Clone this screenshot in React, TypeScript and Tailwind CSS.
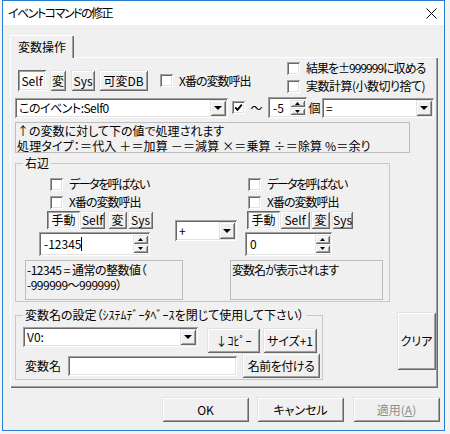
import React from "react";

const FONT = "font-['Noto_Sans_CJK_JP',sans-serif] [font-feature-settings:'palt']";
const RAISED =
  "bg-[#f0f0f0] shadow-[inset_1px_1px_#e3e3e3,inset_-1px_-1px_#696969,inset_2px_2px_#ffffff,inset_-2px_-2px_#a0a0a0]";
const PRESSED =
  "bg-[#fbfbfb] shadow-[inset_1px_1px_#696969,inset_-1px_-1px_#ffffff,inset_2px_2px_#a0a0a0,inset_-2px_-2px_#e3e3e3]";
const SUNKEN =
  "bg-white shadow-[inset_1px_1px_#a0a0a0,inset_-1px_-1px_#ffffff,inset_2px_2px_#696969,inset_-2px_-2px_#e3e3e3]";

function Btn({
  children,
  className = "",
  pressed = false,
}: {
  children: React.ReactNode;
  className?: string;
  pressed?: boolean;
}) {
  return (
    <div
      className={`flex items-center justify-center leading-none shrink-0 whitespace-nowrap ${
        pressed ? PRESSED : RAISED
      } ${className}`}
    >
      {children}
    </div>
  );
}

function Arrow() {
  return (
    <svg width="8" height="4" viewBox="0 0 8 4">
      <path d="M0 0H8L4 4Z" fill="#000" />
    </svg>
  );
}

function Combo({ text, className = "" }: { text: string; className?: string }) {
  return (
    <div className={`flex p-[2px] shrink-0 ${SUNKEN} ${className}`}>
      <div className="flex-1 flex items-center pl-[2px] leading-none whitespace-nowrap overflow-hidden">
        {text}
      </div>
      <div className={`w-[16px] flex items-center justify-center ${RAISED}`}>
        <Arrow />
      </div>
    </div>
  );
}

function Spin({
  value,
  caret = false,
  className = "",
}: {
  value: string;
  caret?: boolean;
  className?: string;
}) {
  const half = `flex-1 flex items-center justify-center ${RAISED}`;
  return (
    <div className={`flex p-[2px] shrink-0 ${SUNKEN} ${className}`}>
      <div className="flex-1 flex items-center pl-[3px] leading-none">
        {value}
        {caret && <span className="w-px h-[14px] bg-black" />}
      </div>
      <div className="w-[15px] flex flex-col gap-px py-px">
        <div className={half}>
          <svg width="5" height="3" viewBox="0 0 5 3">
            <path d="M0 3H5L2.5 0Z" fill="#000" />
          </svg>
        </div>
        <div className={half}>
          <svg width="5" height="3" viewBox="0 0 5 3">
            <path d="M0 0H5L2.5 3Z" fill="#000" />
          </svg>
        </div>
      </div>
    </div>
  );
}

function Check({ checked = false, className = "" }: { checked?: boolean; className?: string }) {
  return (
    <span
      className={`inline-flex w-[13px] h-[13px] shrink-0 items-center justify-center ${SUNKEN} ${className}`}
    >
      {checked && (
        <svg width="9" height="9" viewBox="0 0 9 9">
          <path d="M1.2 4.3L3.5 6.8L7.8 1.6" fill="none" stroke="#000" strokeWidth="1.8" />
        </svg>
      )}
    </span>
  );
}

function CheckRow({
  label,
  className = "",
  textClass = "",
}: {
  label: string;
  className?: string;
  textClass?: string;
}) {
  return (
    <div className={`flex items-center h-[18px] ${className}`}>
      <Check />
      <span className={`ml-[6px] leading-none whitespace-nowrap ${textClass}`}>{label}</span>
    </div>
  );
}

export default function App() {
  return (
    <div className={`w-[450px] h-[434px] bg-[#f4f4f4] overflow-hidden text-[12px] text-black ${FONT}`}>
      <div className="ml-[2px] w-[443px] h-[431px] border border-[#2a7fd4] bg-[#f0f0f0] flex flex-col">
        {/* title bar */}
        <div className="h-[24px] bg-white flex items-center shrink-0">
          <span className="ml-[5px] leading-none tracking-[-1.5px]">イベントコマンドの修正</span>
          <svg className="ml-auto mr-[7px]" width="11" height="11" viewBox="0 0 11 11">
            <path d="M0.5 0.5L10.5 10.5M10.5 0.5L0.5 10.5" stroke="#000" strokeWidth="1" />
          </svg>
        </div>

        {/* tab */}
        <div className="mt-[10px] ml-[7px] w-[64px] h-[23px] -mb-px relative z-10 bg-[#f0f0f0] flex items-center justify-center leading-none shadow-[inset_1px_0_#ffffff,inset_0_1px_#ffffff,inset_-1px_0_#696969,inset_-2px_0_#a0a0a0]">
          変数操作
        </div>

        {/* tab panel */}
        <div className="ml-[7px] w-[428px] h-[331px] shrink-0 flex flex-col shadow-[inset_1px_1px_#ffffff,inset_-1px_-1px_#696969,inset_-2px_-2px_#a0a0a0]">
          {/* row 1 */}
          <div className="flex mt-[2px] h-[36px]">
            <div className="w-[277px] flex items-center mt-[11px] h-[21px] pl-[8px]">
              <Btn pressed className="w-[28px] h-[21px]">Self</Btn>
              <Btn className="ml-[4px] w-[16px] h-[21px]">変</Btn>
              <Btn className="ml-[5px] w-[24px] h-[21px]">Sys</Btn>
              <Btn className="ml-[4px] w-[49px] h-[21px]">可変DB</Btn>
              <Check className="ml-[12px]" />
              <span className="ml-[6px] leading-none whitespace-nowrap tracking-[-1px]">X番の変数呼出</span>
            </div>
            <div className="flex flex-col">
              <CheckRow label="結果を±999999に収める" textClass="tracking-[-1px]" />
              <CheckRow label="実数計算(小数切り捨て)" textClass="tracking-[-0.5px]" />
            </div>
          </div>

          {/* row 2 */}
          <div className="flex items-center mt-[2px] h-[21px]">
            <Combo text="このイベント:Self0" className="ml-[5px] w-[213px] h-[20px] tracking-[-0.5px]" />
            <Check checked className="ml-[4px]" />
            <span className="w-[23px] text-center leading-none">〜</span>
            <Spin value="-5" className="w-[39px] h-[21px]" />
            <span className="w-[15px] text-center leading-none">個</span>
            <Combo text="=" className="w-[112px] h-[20px]" />
          </div>

          {/* info */}
          <div className="mt-[4px] ml-[5px] w-[395px] h-[31px] border border-[#bdbdbd] leading-[15px] pl-px whitespace-nowrap">
            <div>↑の変数に対して下の値で処理されます</div>
            <div className="tracking-[0.15px]">処理タイプ：＝代入 ＋＝加算 －＝減算 ×＝乗算 ÷＝除算 %＝余り</div>
          </div>

          {/* 右辺 */}
          <fieldset className="mt-[3px] ml-[5px] w-[375px] border border-[#c8c8c8]">
            <legend className="ml-[7px] px-[2px] h-[14px] leading-[14px]">右辺</legend>
            <div className="flex items-start">
              <div className="ml-[23px] w-[121px] flex flex-col">
                <CheckRow label="データを呼ばない" className="mt-[5px] ml-[11px]" textClass="tracking-[-1.5px]" />
                <CheckRow label="X番の変数呼出" className="ml-[11px]" textClass="tracking-[-1px]" />
                <div className="flex ml-[8px] h-[18px]">
                  <Btn pressed className="w-[33px] h-[18px]">手動</Btn>
                  <Btn className="w-[25px] h-[18px]">Self</Btn>
                  <Btn className="ml-[3px] w-[19px] h-[18px]">変</Btn>
                  <Btn className="ml-px w-[25px] h-[18px]">Sys</Btn>
                </div>
                <Spin value="-12345" caret className="mt-[3px] w-[111px] h-[24px]" />
              </div>
              <Combo text="+" className="ml-[15px] mt-[50px] w-[62px] h-[21px]" />
              <div className="ml-[8px] flex flex-col">
                <CheckRow label="データを呼ばない" className="mt-[5px] ml-[3px]" textClass="tracking-[-1.5px]" />
                <CheckRow label="X番の変数呼出" className="ml-[3px]" textClass="tracking-[-1px]" />
                <div className="flex ml-[2px] h-[18px]">
                  <Btn pressed className="w-[33px] h-[18px]">手動</Btn>
                  <Btn className="w-[30px] h-[18px]">Self</Btn>
                  <Btn className="ml-px w-[19px] h-[18px]">変</Btn>
                  <Btn className="ml-[2px] w-[21px] h-[18px]">Sys</Btn>
                </div>
                <Spin value="0" className="mt-[3px] w-[87px] h-[24px]" />
              </div>
            </div>
            <div className="flex mt-[4px] pb-px">
              <div className="ml-[9px] w-[158px] h-[40px] border border-[#bdbdbd] leading-[15px] pt-[1px] pl-px whitespace-nowrap tracking-[-0.5px]">
                -12345 = 通常の整数値（
                <br />
                -999999〜999999）
              </div>
              <div className="ml-[47px] w-[153px] h-[40px] border border-[#bdbdbd] leading-[15px] pt-[1px] pl-px whitespace-nowrap tracking-[-1px]">
                変数名が表示されます
              </div>
            </div>
          </fieldset>

          {/* 変数名の設定 + クリア */}
          <div className="flex items-start mt-[6px]">
            <fieldset className="ml-[5px] w-[308px] border border-[#c8c8c8]">
              <legend className="ml-[7px] px-[2px] h-[14px] leading-[14px] whitespace-nowrap">
                変数名の設定
                <span>（ｼｽﾃﾑﾃﾞｰﾀﾍﾞｰｽを閉じて使用して下さい）</span>
              </legend>
              <div className="flex items-start h-[31px]">
                <Combo text="V0:" className="ml-[7px] mt-[5px] w-[175px] h-[20px]" />
                <Btn className="ml-[9px] mt-[6px] w-[53px] h-[25px]">↓ｺﾋﾟｰ</Btn>
                <Btn className="ml-[3px] mt-[6px] w-[54px] h-[25px]">サイズ+1</Btn>
              </div>
              <div className="flex items-center h-[25px] mb-px">
                <span className="ml-[9px] w-[43px] leading-none">変数名</span>
                <div className={`w-[169px] h-[20px] ${SUNKEN}`} />
                <Btn className="ml-[5px] w-[78px] h-[25px] tracking-[-0.5px]">名前を付ける</Btn>
              </div>
            </fieldset>
            <Btn className="ml-[74px] mt-[4px] w-[39px] h-[58px]">クリア</Btn>
          </div>
        </div>

        {/* dialog buttons */}
        <div className="flex mt-[9px]">
          <Btn className="ml-[159px] w-[87px] h-[25px] shadow-[inset_0_0_0_1px_#000000,inset_-2px_-2px_#696969,inset_2px_2px_#ffffff,inset_-3px_-3px_#a0a0a0]">
            OK
          </Btn>
          <Btn className="ml-[8px] w-[87px] h-[25px]">キャンセル</Btn>
          <Btn className="ml-[9px] w-[87px] h-[25px] text-[#8d8d8d]">
            適用(<span className="underline">A</span>)
          </Btn>
        </div>
      </div>
    </div>
  );
}
